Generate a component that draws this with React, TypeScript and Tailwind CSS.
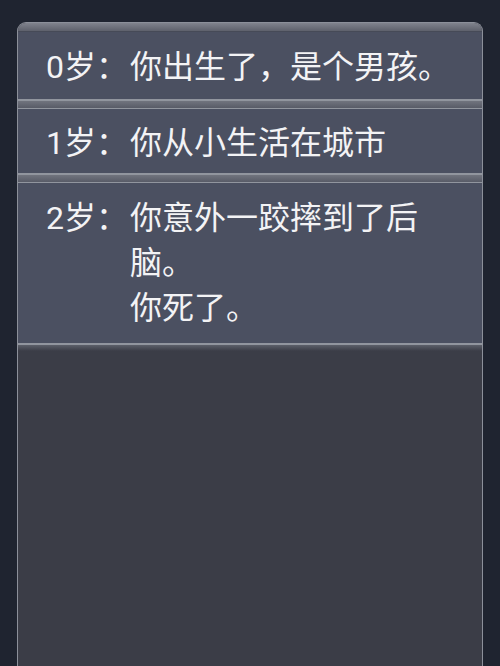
import React from "react";

type Entry = { age: number; lines: string[]; pad: string };

const entries: Entry[] = [
  { age: 0, lines: ["你出生了，是个男孩。"], pad: "pt-[13px] pb-[9px]" },
  { age: 1, lines: ["你从小生活在城市"], pad: "pt-[12px] pb-[7px]" },
  { age: 2, lines: ["你意外一跤摔到了后脑。", "你死了。"], pad: "pt-[13px] pb-[12px]" },
];

// Raised divider strip drawn above each log row
function Bevel({ first = false }: { first?: boolean }) {
  return (
    <div
      className={
        first
          ? "h-[9px] bg-gradient-to-b from-[#80838d] to-[#5e616c] border-b border-[#464a57]"
          : "h-[10px] border-t-2 border-[#91959e] bg-gradient-to-b from-[#71747e] to-[#585b67] border-b border-[#3f4250]"
      }
    />
  );
}

export default function App() {
  return (
    <div className="w-[500px] h-[666px] overflow-hidden bg-[#1f2430]">
      <div
        className="ml-[17px] mt-[22px] w-[466px] h-[660px] rounded-t-[9px] border border-b-0 border-[#8c909a] bg-[#3b3d47] overflow-hidden text-[#f3f3f5] text-[32px] leading-[45px]"
        style={{ fontFamily: '"Roboto", "Noto Sans CJK SC", sans-serif' }}
      >
        <Bevel first />
        {entries.map((e, i) => (
          <React.Fragment key={e.age}>
            {i > 0 && <Bevel />}
            <div className={`flex bg-[#4b5061] pl-[28px] pr-[24px] ${e.pad}`}>
              <div className="w-[84px] shrink-0 whitespace-nowrap">{e.age}岁：</div>
              <div className="flex-1">
                {e.lines.map((l) => (
                  <div key={l}>{l}</div>
                ))}
              </div>
            </div>
          </React.Fragment>
        ))}
        <div className="h-[8px] border-t-2 border-[#91959e] bg-gradient-to-b from-[#5c5f69] to-[#3b3d47]" />
      </div>
    </div>
  );
}
